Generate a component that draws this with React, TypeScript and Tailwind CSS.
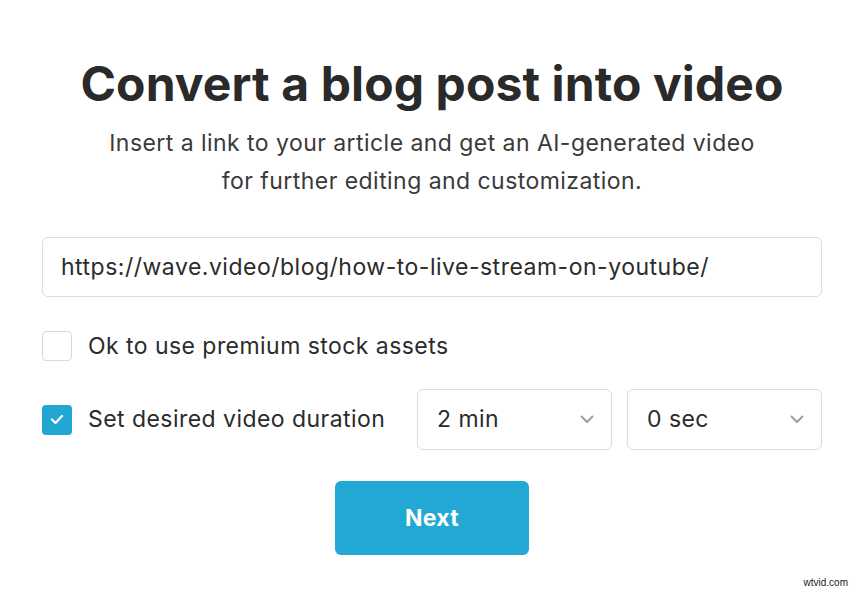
import React, { useState } from 'react';

const Chevron: React.FC = () => (
  <svg width="14" height="9" viewBox="0 0 14 9" fill="none" className="shrink-0">
    <path d="M1.5 1.5L7 7L12.5 1.5" stroke="#9a9a9a" strokeWidth="1.8" strokeLinecap="round" strokeLinejoin="round" />
  </svg>
);

const Checkbox: React.FC<{ checked: boolean; onChange: () => void }> = ({ checked, onChange }) => (
  <button
    onClick={onChange}
    className={
      checked
        ? 'w-[30px] h-[30px] shrink-0 rounded-[4px] bg-[#22a7d5] flex items-center justify-center'
        : 'w-[30px] h-[30px] shrink-0 rounded-[4px] border border-[#d5dadd] bg-white'
    }
  >
    {checked && (
      <svg width="14" height="11" viewBox="0 0 14 11" fill="none">
        <path d="M2 5.5L5.5 9L12 2" stroke="white" strokeWidth="2.2" strokeLinecap="round" strokeLinejoin="round" />
      </svg>
    )}
  </button>
);

const Select: React.FC<{ value: string }> = ({ value }) => (
  <div className="w-[195px] h-[61px] rounded-[6px] border border-[#d8dde0] bg-white flex items-center justify-between pl-[19px] pr-[17px]">
    <span className="text-[23px] tracking-[0.45px] text-[#2b2b2b]">{value}</span>
    <Chevron />
  </div>
);

const App: React.FC = () => {
  const [premium, setPremium] = useState(false);
  const [duration, setDuration] = useState(true);

  return (
    <div className="relative w-[867px] h-[596px] bg-white overflow-hidden font-['Inter','Liberation_Sans',sans-serif] text-[#2b2b2b]">
      <div className="w-[780px] ml-[42px] flex flex-col items-center pt-[54px]">
        <h1 className="h-[60px] leading-[60px] text-[48px] font-bold tracking-[0.1px] text-[#2a2a2a] whitespace-nowrap">
          Convert a blog post into video
        </h1>
        <p className="mt-[10px] text-[23px] leading-[38px] tracking-[0.45px] text-center text-[#3a3a3a] whitespace-nowrap">
          Insert a link to your article and get an AI-generated video
          <br />
          for further editing and customization.
        </p>

        <div className="mt-[37px] w-full h-[60px] rounded-[6px] border border-[#d8dde0] flex items-center px-[18px]">
          <span className="text-[23px] tracking-[0.5px] text-[#2b2b2b] whitespace-nowrap">
            https://wave.video/blog/how-to-live-stream-on-youtube/
          </span>
        </div>

        <div className="mt-[34px] w-full flex items-center gap-[16px] h-[30px]">
          <Checkbox checked={premium} onChange={() => setPremium(!premium)} />
          <span className="text-[23px] tracking-[0.45px] text-[#2b2b2b]">Ok to use premium stock assets</span>
        </div>

        <div className="mt-[28px] w-full flex items-center">
          <Checkbox checked={duration} onChange={() => setDuration(!duration)} />
          <span className="ml-[16px] text-[23px] tracking-[0.45px] text-[#2b2b2b]">Set desired video duration</span>
          <div className="ml-auto flex gap-[15px]">
            <Select value="2 min" />
            <Select value="0 sec" />
          </div>
        </div>

        <button className="mt-[31px] w-[194px] h-[74px] rounded-[6px] bg-[#21a8d4] text-white text-[23px] tracking-[0.3px] font-bold">
          Next
        </button>
      </div>

      <span className="absolute right-[19px] bottom-[6px] text-[10px] text-[#222] font-['Liberation_Sans',sans-serif]">
        wtvid.com
      </span>
    </div>
  );
};

export default App;
